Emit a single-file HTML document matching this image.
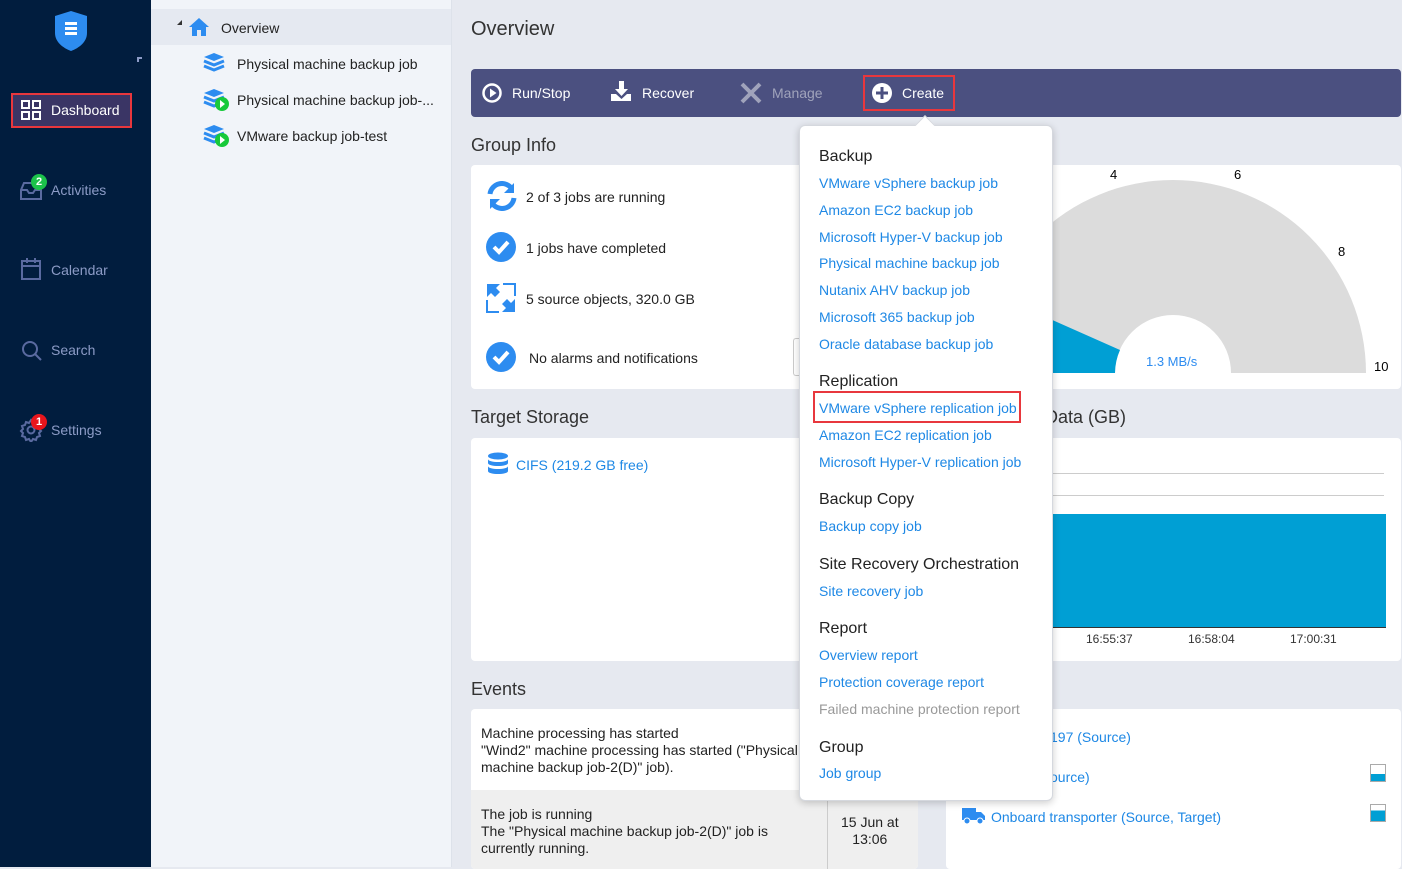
<!DOCTYPE html>
<html><head><meta charset="utf-8"><style>
*{box-sizing:border-box;margin:0;padding:0}
body{width:1402px;height:867px;overflow:hidden;background:#e6e9f0;font-family:"Liberation Sans",sans-serif;font-size:14px;color:#222;position:relative}
.abs{position:absolute}
#side{left:0;top:0;width:151px;height:867px;background:#011d3e}
.nav{position:absolute;left:20px;color:#8c9bc6;font-size:14px}
#tree{left:151px;top:0;width:301px;height:867px;background:#f1f4f9;border-right:1px solid #dde2ea}
.ti{position:absolute;font-size:14px;color:#222}
.panel{position:absolute;background:#fff;border-radius:4px}
h2{position:absolute;font-weight:normal;font-size:18px;color:#333}
.lk{color:#1e88e5}
#dd{left:799px;top:125px;width:254px;height:676px;background:#fff;border:1px solid #d5d8de;border-radius:6px;box-shadow:0 2px 8px rgba(0,0,0,.2)}
#dd .h{position:absolute;left:19px;font-size:16px;color:#222}
#dd .l{position:absolute;left:19px;font-size:14px;color:#1e88e5}
.tb{position:absolute;top:85px;color:#fff;font-size:14px}
</style></head><body>
<div id="side" class="abs">
<svg class="abs" style="left:55px;top:11px" width="32" height="40" viewBox="0 0 32 40"><path d="M16 0L32 5V22C32 31 24 37 16 40C8 37 0 31 0 22V5Z" fill="#2d8cf0"/><rect x="10" y="11" width="12" height="3" fill="#fff"/><rect x="10" y="16" width="12" height="3" fill="#fff"/><rect x="10" y="21" width="12" height="3" fill="#fff"/></svg>
<div class="abs" style="left:137px;top:57px;width:5px;height:5px;border-left:2px solid #8c9bc6;border-top:2px solid #8c9bc6"></div>
<div class="abs" style="left:11px;top:93px;width:121px;height:35px;background:#3a3565;border:2px solid #e8373d"></div>
<svg class="abs" style="left:21px;top:100px" width="20" height="20"><g fill="none" stroke="#fff" stroke-width="2"><rect x="1" y="1" width="7" height="7"/><rect x="12" y="1" width="7" height="7"/><rect x="1" y="12" width="7" height="7"/><rect x="12" y="12" width="7" height="7"/></g></svg>
<div class="abs" style="left:51px;top:102px;color:#fff;font-size:14px">Dashboard</div>
<svg class="abs" style="left:20px;top:180px" width="22" height="20"><path d="M1 10L4 3H18L21 10V19H1Z M1 10H7L9 13H13L15 10H21" fill="none" stroke="#5a6aa0" stroke-width="2"/></svg>
<div class="abs" style="left:31px;top:174px;width:16px;height:16px;border-radius:50%;background:#1cc24a;color:#fff;font-size:11px;font-weight:bold;text-align:center;line-height:16px">2</div>
<div class="nav" style="left:51px;top:182px">Activities</div>
<svg class="abs" style="left:21px;top:258px" width="20" height="22"><rect x="1" y="3" width="18" height="18" fill="none" stroke="#5a6aa0" stroke-width="2"/><path d="M1 8H19M6 0V5M14 0V5" stroke="#5a6aa0" stroke-width="2"/></svg>
<div class="nav" style="left:51px;top:262px">Calendar</div>
<svg class="abs" style="left:21px;top:340px" width="22" height="22"><circle cx="9" cy="9" r="7" fill="none" stroke="#5a6aa0" stroke-width="2"/><path d="M14 14L20 20" stroke="#5a6aa0" stroke-width="2"/></svg>
<div class="nav" style="left:51px;top:342px">Search</div>
<svg class="abs" style="left:19px;top:418px" width="24" height="24" viewBox="0 0 24 24"><path d="M12 2l2 3 3-1 1 3 3 1-1 3 2 2-2 2 1 3-3 1-1 3-3-1-2 3-2-3-3 1-1-3-3-1 1-3-2-2 2-2-1-3 3-1 1-3 3 1z" fill="none" stroke="#5a6aa0" stroke-width="2"/><circle cx="12" cy="12" r="3.5" fill="none" stroke="#5a6aa0" stroke-width="2"/></svg>
<div class="abs" style="left:31px;top:414px;width:16px;height:16px;border-radius:50%;background:#e8151c;color:#fff;font-size:11px;font-weight:bold;text-align:center;line-height:16px">1</div>
<div class="nav" style="left:51px;top:422px">Settings</div>
</div>
<div id="tree" class="abs">
<div class="abs" style="left:0;top:9px;width:300px;height:36px;background:#e5e9f1"></div>
<div class="abs" style="left:26px;top:20px;width:0;height:0;border-left:5px solid transparent;border-bottom:5px solid #333"></div>
<svg class="abs" style="left:37px;top:17px" width="22" height="20"><path d="M11 1L1 10H4V19H9V13H13V19H18V10H21Z" fill="#2d8cf0"/></svg>
<div class="ti" style="left:70px;top:20px">Overview</div>
<svg class="abs" style="left:52px;top:52px" width="22" height="22"><path d="M11 1L21 5L11 9L1 5Z" fill="#2d8cf0"/><path d="M1 9L11 13L21 9M1 14L11 18L21 14" fill="none" stroke="#2d8cf0" stroke-width="3"/></svg>
<div class="ti" style="left:86px;top:56px">Physical machine backup job</div>
<svg class="abs" style="left:52px;top:88px" width="26" height="24"><path d="M11 1L21 5L11 9L1 5Z" fill="#2d8cf0"/><path d="M1 9L11 13L21 9M1 14L11 18L21 14" fill="none" stroke="#2d8cf0" stroke-width="3"/><circle cx="19" cy="16" r="7" fill="#17c93a"/><path d="M17 12V20L22 16Z" fill="#fff"/></svg>
<div class="ti" style="left:86px;top:92px">Physical machine backup job-...</div>
<svg class="abs" style="left:52px;top:124px" width="26" height="24"><path d="M11 1L21 5L11 9L1 5Z" fill="#2d8cf0"/><path d="M1 9L11 13L21 9M1 14L11 18L21 14" fill="none" stroke="#2d8cf0" stroke-width="3"/><circle cx="19" cy="16" r="7" fill="#17c93a"/><path d="M17 12V20L22 16Z" fill="#fff"/></svg>
<div class="ti" style="left:86px;top:128px">VMware backup job-test</div>
</div>
<h2 style="left:471px;top:18px;font-size:20px">Overview</h2>
<div class="abs" style="left:471px;top:69px;width:930px;height:48px;background:#4b5080;border-radius:4px"></div>
<svg class="abs" style="left:482px;top:83px" width="20" height="20"><circle cx="10" cy="10" r="8.5" fill="none" stroke="#fff" stroke-width="2.5"/><path d="M8 5.5V14.5L14.5 10Z" fill="#fff"/></svg>
<div class="tb" style="left:512px">Run/Stop</div>
<svg class="abs" style="left:610px;top:81px" width="24" height="22"><path d="M9 0H14V8H18L11.5 15L5 8H9Z M1 13V20H21V13H17L11.5 18L6 13Z" fill="#fff"/></svg>
<div class="tb" style="left:642px">Recover</div>
<svg class="abs" style="left:739px;top:81px" width="24" height="24"><path d="M3 3L21 21M21 3L3 21" stroke="#a0a3bb" stroke-width="4"/></svg>
<div class="tb" style="left:772px;color:#a0a3bb">Manage</div>
<div class="abs" style="left:863px;top:75px;width:92px;height:36px;border:2px solid #e8373d"></div>
<svg class="abs" style="left:871px;top:82px" width="22" height="22"><circle cx="11" cy="11" r="10" fill="#fff"/><path d="M11 5V17M5 11H17" stroke="#4b5080" stroke-width="3"/></svg>
<div class="tb" style="left:902px">Create</div>

<h2 style="left:471px;top:135px">Group Info</h2>
<div class="panel" style="left:471px;top:165px;width:930px;height:224px"></div>
<svg class="abs" style="left:486px;top:181px" width="32" height="30" viewBox="0 0 32 30"><path d="M4 13A12 12 0 0 1 26 8" fill="none" stroke="#2d8cf0" stroke-width="5"/><path d="M28 2V12H18Z" fill="#2d8cf0"/><path d="M28 17A12 12 0 0 1 6 22" fill="none" stroke="#2d8cf0" stroke-width="5"/><path d="M4 28V18H14Z" fill="#2d8cf0"/></svg>
<div class="abs" style="left:526px;top:189px">2 of 3 jobs are running</div>
<svg class="abs" style="left:486px;top:232px" width="30" height="30"><circle cx="15" cy="15" r="15" fill="#2d8cf0"/><path d="M8 15L13 20L22 10" fill="none" stroke="#fff" stroke-width="4"/></svg>
<div class="abs" style="left:526px;top:240px">1 jobs have completed</div>
<svg class="abs" style="left:486px;top:283px" width="30" height="30"><path d="M1 1H14L10 5L14 9L9 14L5 10L1 14Z M29 29H16L20 25L16 21L21 16L25 20L29 16Z" fill="#2d8cf0"/><path d="M1 17V29H13M29 13V1H17" fill="none" stroke="#2d8cf0" stroke-width="2"/></svg>
<div class="abs" style="left:526px;top:291px">5 source objects, 320.0 GB</div>
<svg class="abs" style="left:486px;top:342px" width="30" height="30"><circle cx="15" cy="15" r="15" fill="#2d8cf0"/><path d="M8 15L13 20L22 10" fill="none" stroke="#fff" stroke-width="4"/></svg>
<div class="abs" style="left:529px;top:350px">No alarms and notifications</div>
<div class="abs" style="left:793px;top:338px;width:10px;height:38px;border:1px solid #ccc;border-right:none;border-radius:3px 0 0 3px"></div>
<svg class="abs" style="left:960px;top:165px" width="441" height="224">
<path d="M20 208A193 193 0 0 1 406 208H271A58 58 0 0 0 155 208Z" fill="#dcdcdc"/>
<path d="M20 208A193 193 0 0 1 36 130L160 185A58 58 0 0 0 155 208Z" fill="#009fd4"/>
<text x="150" y="14" font-size="13" font-family="Liberation Sans">4</text>
<text x="274" y="14" font-size="13" font-family="Liberation Sans">6</text>
<text x="378" y="91" font-size="13" font-family="Liberation Sans">8</text>
<text x="414" y="206" font-size="13" font-family="Liberation Sans">10</text>
<text x="186" y="201" font-size="13" fill="#2d8cf0" font-family="Liberation Sans">1.3 MB/s</text>
</svg>
<h2 style="left:471px;top:407px">Target Storage</h2>
<h2 style="left:1045px;top:407px">Data (GB)</h2>
<div class="panel" style="left:471px;top:438px;width:930px;height:223px"></div>
<svg class="abs" style="left:487px;top:452px" width="22" height="24"><ellipse cx="11" cy="4" rx="10" ry="3.5" fill="#2d8cf0"/><path d="M1 7C1 11 21 11 21 7V11C21 15 1 15 1 11ZM1 14C1 18 21 18 21 14V19C21 23 1 23 1 19Z" fill="#2d8cf0"/></svg>
<div class="abs lk" style="left:516px;top:457px">CIFS (219.2 GB free)</div>
<div class="abs" style="left:1052px;top:473px;width:332px;height:1px;background:#ccc"></div>
<div class="abs" style="left:1052px;top:495px;width:332px;height:1px;background:#ccc"></div>
<div class="abs" style="left:1052px;top:514px;width:334px;height:114px;background:#009fd4"></div>
<div class="abs" style="left:1052px;top:627px;width:334px;height:1px;background:#333"></div>
<div class="abs" style="left:1086px;top:632px;font-size:12px;color:#333">16:55:37</div>
<div class="abs" style="left:1188px;top:632px;font-size:12px;color:#333">16:58:04</div>
<div class="abs" style="left:1290px;top:632px;font-size:12px;color:#333">17:00:31</div>

<h2 style="left:471px;top:679px">Events</h2>
<div class="panel" style="left:471px;top:709px;width:447px;height:160px;overflow:hidden">
<div class="abs" style="left:10px;top:16px;line-height:17px">Machine processing has started<br>"Wind2" machine processing has started ("Physical<br>machine backup job-2(D)" job).</div>
<div class="abs" style="left:0;top:81px;width:447px;height:80px;background:#efefef"></div>
<div class="abs" style="left:356px;top:81px;width:1px;height:80px;background:#ccc"></div>
<div class="abs" style="left:10px;top:97px;line-height:17px">The job is running<br>The "Physical machine backup job-2(D)" job is<br>currently running.</div>
<div class="abs" style="left:370px;top:105px;line-height:17px;text-align:center">15 Jun at<br>13:06</div>
</div>
<div class="panel" style="left:946px;top:709px;width:455px;height:160px"></div>
<div class="abs lk" style="left:1050px;top:729px">197 (Source)</div>
<div class="abs lk" style="left:1050px;top:769px">ource)</div>
<div class="abs" style="left:1370px;top:764px;width:16px;height:18px;border:1px solid #aaa;background:linear-gradient(#fff 55%,#009fd4 55%)"></div>
<div class="abs" style="left:1370px;top:804px;width:16px;height:18px;border:1px solid #aaa;background:linear-gradient(#fff 35%,#009fd4 35%)"></div>
<svg class="abs" style="left:961px;top:807px" width="26" height="18"><path d="M1 1H15V13H1Z M15 5H20L24 9V13H15Z" fill="#2d8cf0"/><circle cx="6" cy="14" r="3" fill="#2d8cf0" stroke="#fff"/><circle cx="19" cy="14" r="3" fill="#2d8cf0" stroke="#fff"/></svg>
<div class="abs lk" style="left:991px;top:809px">Onboard transporter (Source, Target)</div>

<div id="dd" class="abs">
<div class="h" style="top:22px">Backup</div>
<div class="l" style="top:49px">VMware vSphere backup job</div>
<div class="l" style="top:76px">Amazon EC2 backup job</div>
<div class="l" style="top:103px">Microsoft Hyper-V backup job</div>
<div class="l" style="top:129px">Physical machine backup job</div>
<div class="l" style="top:156px">Nutanix AHV backup job</div>
<div class="l" style="top:183px">Microsoft 365 backup job</div>
<div class="l" style="top:210px">Oracle database backup job</div>
<div class="h" style="top:247px">Replication</div>
<div class="abs" style="left:13px;top:265px;width:208px;height:32px;border:2px solid #e8373d"></div>
<div class="l" style="top:274px">VMware vSphere replication job</div>
<div class="l" style="top:301px">Amazon EC2 replication job</div>
<div class="l" style="top:328px">Microsoft Hyper-V replication job</div>
<div class="h" style="top:365px">Backup Copy</div>
<div class="l" style="top:392px">Backup copy job</div>
<div class="h" style="top:430px">Site Recovery Orchestration</div>
<div class="l" style="top:457px">Site recovery job</div>
<div class="h" style="top:494px">Report</div>
<div class="l" style="top:521px">Overview report</div>
<div class="l" style="top:548px">Protection coverage report</div>
<div class="l" style="top:575px;color:#999">Failed machine protection report</div>
<div class="h" style="top:613px">Group</div>
<div class="l" style="top:639px">Job group</div>
</div>
<div class="abs" style="left:918px;top:118px;width:14px;height:14px;background:#fff;transform:rotate(45deg);border-left:1px solid #d5d8de;border-top:1px solid #d5d8de"></div>
</body></html>
